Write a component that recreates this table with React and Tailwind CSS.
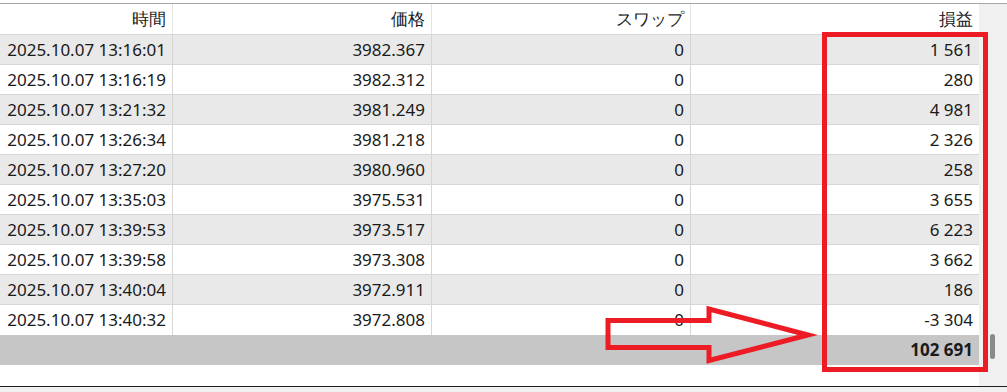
import React from 'react';

const rows = [
  ['2025.10.07 13:16:01', '3982.367', '0', '1 561'],
  ['2025.10.07 13:16:19', '3982.312', '0', '280'],
  ['2025.10.07 13:21:32', '3981.249', '0', '4 981'],
  ['2025.10.07 13:26:34', '3981.218', '0', '2 326'],
  ['2025.10.07 13:27:20', '3980.960', '0', '258'],
  ['2025.10.07 13:35:03', '3975.531', '0', '3 655'],
  ['2025.10.07 13:39:53', '3973.517', '0', '6 223'],
  ['2025.10.07 13:39:58', '3973.308', '0', '3 662'],
  ['2025.10.07 13:40:04', '3972.911', '0', '186'],
  ['2025.10.07 13:40:32', '3972.808', '0', '-3 304'],
];

const cols = 'grid grid-cols-[173px_259px_259px_288px]';

const App = () => {
  return (
    <div className="relative w-[1007px] h-[392px] bg-white overflow-hidden font-['Noto_Sans','Segoe_UI',sans-serif] text-[17px] text-[#1a1a1a]">
      <div className="h-[3px] bg-white" />
      <div className="flex border-t border-[#a8a8a8]">
        {/* Table */}
        <div className="w-[979px]">
          {/* Header */}
          <div className={`${cols} h-[31px] border-b border-[#d6d6d6]`}>
            {['時間', '価格', 'スワップ', '損益'].map((h, i) => (
              <div
                key={h}
                className={`flex items-center justify-end pr-[6px] ${i < 3 ? 'border-r border-[#e3e3e3]' : ''}`}
              >
                {h}
              </div>
            ))}
          </div>

          {/* Rows */}
          {rows.map((r, ri) => (
            <div
              key={ri}
              className={`${cols} h-[30px] ${ri < rows.length - 1 ? 'border-b border-[#d6d6d6]' : ''} ${ri % 2 === 0 ? 'bg-[#e9e9e9]' : 'bg-white'}`}
            >
              {r.map((c, ci) => (
                <div
                  key={ci}
                  className={`flex items-center justify-end pr-[6px] ${ci < 3 ? 'border-r border-[#d6d6d6]' : ''}`}
                >
                  {c}
                </div>
              ))}
            </div>
          ))}

          {/* Total */}
          <div className="flex items-center justify-end h-[30px] bg-[#c6c6c6] pr-[6px] font-bold">
            102 691
          </div>
          <div className="h-[21px]" />
        </div>

        {/* Scrollbar strip */}
        <div className="relative w-[28px] bg-[#f0f0f0]">
          <div className="absolute left-[11px] top-[330px] w-[5px] h-[25px] rounded-full bg-[#8a8a8a]" />
        </div>
      </div>
      <div className="border-t border-[#1f1f1f] h-[10px] bg-[#f0f0f0]" />

      {/* Annotations */}
      <svg className="absolute left-0 top-0 pointer-events-none" width="1007" height="392">
        <rect x="824.5" y="34.5" width="161" height="335" fill="none" stroke="#ed1c24" strokeWidth="5" />
        <polygon
          points="608,320.5 709,320.5 709,309 808,335 709,360.5 709,347.5 608,347.5"
          fill="none"
          stroke="#ed1c24"
          strokeWidth="5"
          strokeLinejoin="miter"
        />
      </svg>
    </div>
  );
};

export default App;
